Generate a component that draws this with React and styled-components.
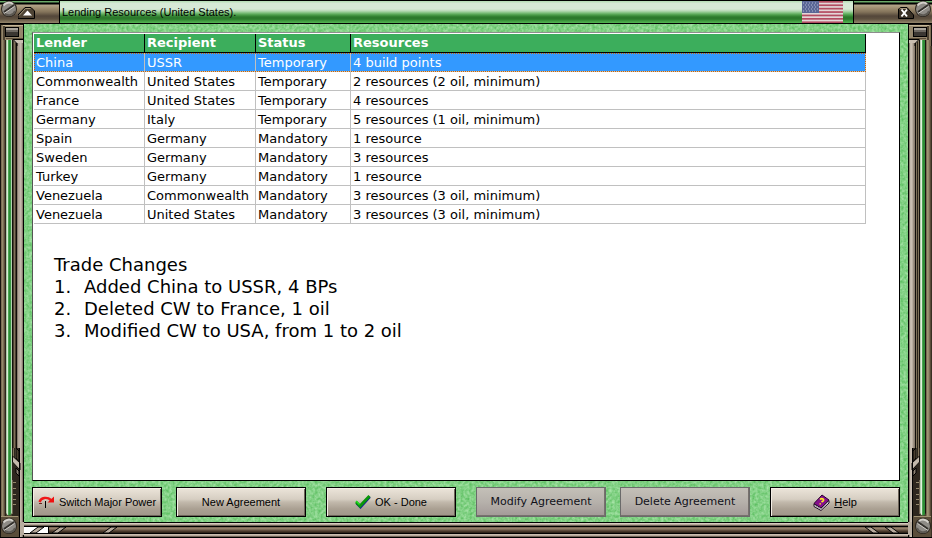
import React from "react";
import styled, { createGlobalStyle, ThemeProvider } from "styled-components";

const theme = {
    font: {
        system: '"Liberation Sans", Arial, sans-serif',
        grid: 'Verdana, "DejaVu Sans", sans-serif',
    },
    color: {
        header: "#3cae5c",
        selected: "#3399ff",
        line: "#c0c0c0",
    },
};

const GlobalStyle = createGlobalStyle`
    * {
        box-sizing: border-box;
    }

    body {
        margin: 0;
        background: #000;
    }

    svg {
        display: block;
        flex-shrink: 0;
    }
`;

// one colour per pixel, drawn as hard stripes
const stripes = (direction, colors) =>
    `linear-gradient(${direction}, ${colors.map((c, i) => `${c} ${i}px ${i + 1}px`).join(", ")})`;

const leftStripes = [
    "#17130e", "#7b6d54", "#94886b", "#7b6d54", "#5a4d3a", "#2b241a", "#a9c7a5", "#d9ecd7",
    "#4ca652", "#2f8d38", "#3b9a44", "#b6d3b2", "#16120d", "#4a3f30", "#7f7259", "#4a3f30",
    "#100d09", "#8a7e70", "#b3a79a", "#b8ad9f", "#c4b9ac", "#b3a79a", "#8a7e70", "#000",
];

const rightStripes = [
    "#000", "#8a7e70", "#c4b9ac", "#c9beb1", "#b8ad9f", "#9c9082", "#8a7e70", "#100d09",
    "#7f7259", "#2b241a", "#7f7259", "#100d09", "#b6d3b2", "#e2f0df", "#4ca652", "#2f8d38",
    "#2f8d38", "#17130e", "#7b6d54", "#a09373", "#94886b", "#7b6d54", "#5a4d3a", "#3a3023",
];

const bottomStripes = [
    "#000", "#d6cabd", "#b5a89a", "#6f6255", "#000", "#7d6a57", "#93806b", "#7d6a57",
    "#5e4d3d", "#463729", "#2e241a", "#000", "#c9bdae", "#b5a89a", "#6f6255", "#000",
];

const Window = styled.div`
    display: flex;
    flex-direction: column;
    min-height: 100vh;
`;

const TitleBar = styled.header`
    display: flex;
    height: 24px;
    border-top: 1px solid #000;
    border-bottom: 1px solid #000;
    background: linear-gradient(
        #b9dfb9 0 1px,
        #d6e9d6 2px 8px,
        #b5d9b3 10px,
        #7cbf7a 12px,
        #4a9c48 14px,
        #2c7a2c 16px 18px,
        #3f9a3f 20px,
        #56b654 22px
    );
`;

const Title = styled.h1`
    flex: 1;
    margin: 0;
    padding-left: 2px;
    font: 11px/22px ${props => props.theme.font.system};
    color: #000;
`;

const TitleCap = styled.div`
    display: flex;
    justify-content: ${props => (props.$right ? "flex-end" : "flex-start")};
    width: ${props => props.$width};
    border-right: ${props => (props.$right ? 0 : 1)}px solid #000;
    border-left: ${props => (props.$right ? 1 : 0)}px solid #000;
    background: linear-gradient(
        #6aa968 0 1px,
        #000 2px 3px,
        #b3a58a 4px,
        #a08f72 7px,
        #83735a 11px,
        #54473a 15px,
        #5e5140 18px,
        #94866b 22px
    );
`;

const CapButton = styled.button`
    width: 20px;
    height: 22px;
    padding: 0;
    border: 0;
    background: none;
`;

const FlagSlot = styled.div`
    padding-right: 10px;
`;

const Body = styled.div`
    display: flex;
    flex: 1;
`;

const Rail = styled.div`
    display: flex;
    flex-direction: column;
    justify-content: space-between;
    width: 24px;
    flex-shrink: 0;
    background: ${props => stripes("to right", props.$colors)};
`;

const Center = styled.div`
    display: flex;
    flex: 1;
    flex-direction: column;
    min-width: 0;
`;

const BottomBar = styled.div`
    display: flex;
    justify-content: space-between;
    height: 16px;
    background: ${stripes("to bottom", bottomStripes)};
`;

const Surface = styled.main`
    position: relative;
    display: flex;
    flex: 1;
    flex-direction: column;
    gap: 6px;
    padding: 8px 8px 5px;
    background: #82d085;
`;

const Texture = styled.svg`
    position: absolute;
    inset: 0;
    width: 100%;
    height: 100%;
`;

const Panel = styled.section`
    position: relative;
    flex: 1;
    border: 1px solid #000;
    border-top-color: #8d8d8d;
    border-left-color: #555;
    background: #fff;
    padding: 1px 33px 0 1px;
`;

const Table = styled.table`
    width: 100%;
    table-layout: fixed;
    border-collapse: separate;
    border-spacing: 0;
    font: 13px/16px ${props => props.theme.font.grid};
    color: #000;
`;

const HeadCell = styled.th`
    width: ${props => props.$width || "auto"};
    height: 19px;
    padding: 1px 2px;
    border-right: 1px solid #000;
    border-bottom: 1px solid #000;
    background: ${props => props.theme.color.header};
    color: #fff;
    text-align: left;
`;

const Cell = styled.td`
    height: 19px;
    padding: 2px 2px 0;
    border-right: 1px solid ${props => props.theme.color.line};
    border-bottom: 1px solid ${props => props.theme.color.line};
    white-space: nowrap;
`;

const Row = styled.tr`
    background: ${props => (props.$selected ? props.theme.color.selected : "#fff")};
    color: ${props => (props.$selected ? "#fff" : "#000")};
    outline: ${props => (props.$selected ? "1px dotted #cc6600" : "none")};
    outline-offset: -1px;
`;

const Changes = styled.div`
    padding: 30px 0 0 20px;
    font: 18px/22px ${props => props.theme.font.grid};
    color: #000;
`;

const ChangesTitle = styled.h2`
    margin: 0;
    font: inherit;
`;

const ChangesList = styled.ol`
    margin: 0;
    padding: 0;
    list-style: none;
`;

const Change = styled.li`
    display: flex;
`;

const ChangeNumber = styled.span`
    width: 30px;
`;

const Footer = styled.footer`
    position: relative;
    display: flex;
    justify-content: space-between;
`;

const ButtonGroup = styled.div`
    display: flex;
    gap: 14px;
`;

const Button = styled.button`
    display: flex;
    align-items: center;
    justify-content: center;
    gap: 4px;
    width: 130px;
    height: 30px;
    padding: 0;
    border: 1px solid #000;
    background: linear-gradient(#ece5da, #d6cec2 40%, #c2b9ac 50%, #aaa092 75%, #a0968a);
    box-shadow: inset 1px 1px #f4eee6, inset -1px -1px #6d6459;
    font: 11px/14px ${props => props.theme.font.system};
    color: #000;
    white-space: nowrap;

    &:disabled {
        border-color: #6a6a6a;
        background: linear-gradient(#c4c0b8, #b6b1ab 50%, #a39a98);
        box-shadow: inset -1px -1px #77716d;
        font-family: ${props => props.theme.font.grid};
        color: #101018;
    }
`;

const Screw = ({ cx, cy }) => (
    <g transform={`translate(${cx} ${cy})`}>
        <circle r="8" fill="#2c261f" />
        <circle r="7" fill="#8e8b86" />
        <path d="M-5.5 -3.5A6.5 6.5 0 0 1 4 -5" fill="none" stroke="#d5d2cc" strokeWidth="2" />
        <path d="M-5 4A6.5 6.5 0 0 0 6 2" fill="none" stroke="#5d5953" strokeWidth="2" />
        <path d="M-5 3L5 -4" stroke="#33302c" strokeWidth="2" />
        <path d="M-5 4.5L5.5 -2.5" stroke="#c9c6c1" strokeWidth="1" />
    </g>
);

const ScrewIcon = () => (
    <svg width="18" height="22">
        <Screw cx="9" cy="8" />
    </svg>
);

const MinimizeIcon = () => (
    <svg width="20" height="22">
        <path d="M0 17.5V14L7 6.5H13L16.5 10V17.5Z" fill="#4e4334" stroke="#000" />
        <path d="M1 14.5L7.5 7.5H12.5" fill="none" stroke="#a7987c" />
        <path d="M5 14.5L9.5 9.5L14 14.5Z" fill="#fff" />
    </svg>
);

const CloseIcon = () => (
    <svg width="20" height="22">
        <path d="M4.5 17.5V8L7 6.5H13L19.5 14V17.5Z" fill="#3a3126" stroke="#000" />
        <path d="M5.5 8L7 7.5H13" fill="none" stroke="#a7987c" />
        <path d="M7.5 8.5L13 15.5M13 8.5L7.5 15.5" stroke="#fff" strokeWidth="2" />
    </svg>
);

const stripeRows = [0, 2, 4, 6, 8, 10, 12];

const FlagIcon = () => (
    <svg width="41" height="22" viewBox="0 0 41 22">
        <rect width="41" height="22" fill="#e3d6d7" />
        {stripeRows.map(row => (
            <rect key={row} y={row * 1.7} width="41" height="1.7" fill="#b34c62" />
        ))}
        <rect width="17" height="12" fill="#5a6796" />
        {[2, 4, 6, 8, 10].map(y => (
            <path key={y} d={`M1 ${y}H16`} stroke="#aeb6cf" strokeDasharray="1 2" strokeDashoffset={y % 4 ? 0 : 1} />
        ))}
    </svg>
);

const RailTop = ({ flip }) => (
    <svg width="24" height="22">
        <g transform={flip ? "translate(24 0) scale(-1 1)" : undefined}>
            <rect width="24" height="16" fill="#94866b" />
            <path d="M0 .5H24M.5 0V22" stroke="#17130e" />
            <path d="M3 1.5H23" stroke="#c4b697" />
            <path d="M1.5 1V22" stroke="#7b6d54" />
            <rect x="3" y="2" width="2" height="14" fill="#4d4231" />
            <rect x="5.5" y="3.5" width="13" height="9" fill="#3b3732" stroke="#000" />
            <path d="M6 5H18" stroke="#a9a49b" strokeWidth="2" />
            <path d="M6 7H18" stroke="#6d6861" strokeWidth="2" />
            <path d="M6 14.5H23" stroke="#5a4d3a" />
            <path d="M13 15.5H24M23.5 0V22" stroke="#000" />
            <path d="M13 16H23V19H16Z" fill="#c9beb1" />
            <path d="M12.5 15L17 19.5V22" fill="none" stroke="#000" />
        </g>
    </svg>
);

const RailBottom = ({ flip }) => (
    <svg width="24" height="90">
        <g transform={flip ? "translate(24 0) scale(-1 1)" : undefined}>
            <rect x="12" width="8" height="90" fill="#2e271e" />
            <path d="M13.5 0V12M15.5 0V10" stroke="#7f7259" />
            <path d="M16 0L19 3V14L16 10Z" fill="#4a3f30" stroke="#000" />
            <path d="M12.5 8L20 15V22L12.5 14Z" fill="#c4b9ac" stroke="#100d09" />
            <path d="M16 20L19 23V28L16 25Z" fill="#8a7e70" stroke="#000" />
            {[34, 40, 46, 51, 56].map(y => (
                <path key={y} d={`M12 ${y}.5H16`} stroke="#94886b" />
            ))}
            <path d="M12.5 32V66" stroke="#6f6350" />
            <path d="M19.5 0V90" stroke="#000" />
            <path d="M6 64V65Q9 70 12 65V64V90H6Z" fill="#4d4231" />
            <rect x="1" y="68" width="18" height="22" fill="#5a4d3a" />
            <path d="M1 68.5H18" stroke="#a09373" />
            <path d="M0 89.5H24M23.5 0V74" stroke="#000" />
            <rect x="20" y="74" width="4" height="13" fill="#b8ad9f" />
            <Screw cx="9" cy="78" />
        </g>
    </svg>
);

const slash = x => `M${x} 11L${x + 8} 5H${x + 14}L${x + 6} 11Z`;

const BottomLeftTrim = () => (
    <svg width="94" height="16">
        <path d="M0 5H24V11H0Z" fill="#fff" />
        <path d="M24.5 5V11" stroke="#000" />
        <g fill="#b8ab9d" stroke="#000">
            <path d={slash(6)} />
            <path d={slash(28)} />
            <path d={slash(79)} />
        </g>
    </svg>
);

const BottomRightTrim = () => (
    <svg width="44" height="16">
        <g fill="#b8ab9d" stroke="#000">
            <path d="M1 5H7L15 11H9Z" />
            <path d="M21 5H27L35 11H29Z" />
        </g>
    </svg>
);

const SwitchIcon = () => (
    <svg width="17" height="14">
        <path d="M1.5 7C3 2.5 9 1.5 13 5" fill="none" stroke="#f01818" strokeWidth="2.4" />
        <path d="M9.5 7.5H16V1.5Z" fill="#f01010" />
        <path d="M7.5 6V13" stroke="#000" />
        <path d="M1 8.5H4" stroke="#6a2020" />
    </svg>
);

const CheckIcon = () => (
    <svg width="16" height="16">
        <path d="M1.5 9.5L5.5 13.5L15 3" fill="none" stroke="#1212a0" strokeWidth="2" />
        <path d="M1 8L5 12L14.5 2" fill="none" stroke="#0a960a" strokeWidth="3" />
        <path d="M1 7L4.5 10.5" stroke="#22e022" strokeWidth="1.4" />
    </svg>
);

const HelpIcon = () => (
    <svg width="17" height="17">
        <path d="M1 9.5L9 1L16 6L8 14.5Z" fill="#86108c" stroke="#2a0030" />
        <path d="M1 10V12.5L8 16.5L16 9V6.5L8 14Z" fill="#f4f0f4" stroke="#1c0a20" />
        <path d="M2 11.5L8 15L15 8" fill="none" stroke="#9a8a9c" />
        <path d="M7 5.5C9 3.5 12 5.5 10 7L8.5 8M7.2 9.2V10.4" fill="none" stroke="#ffee20" strokeWidth="1.6" />
    </svg>
);

const agreements = [
    ["China", "USSR", "Temporary", "4 build points"],
    ["Commonwealth", "United States", "Temporary", "2 resources (2 oil, minimum)"],
    ["France", "United States", "Temporary", "4 resources"],
    ["Germany", "Italy", "Temporary", "5 resources (1 oil, minimum)"],
    ["Spain", "Germany", "Mandatory", "1 resource"],
    ["Sweden", "Germany", "Mandatory", "3 resources"],
    ["Turkey", "Germany", "Mandatory", "1 resource"],
    ["Venezuela", "Commonwealth", "Mandatory", "3 resources (3 oil, minimum)"],
    ["Venezuela", "United States", "Mandatory", "3 resources (3 oil, minimum)"],
];

const changes = [
    "Added China to USSR, 4 BPs",
    "Deleted CW to France, 1 oil",
    "Modified CW to USA, from 1 to 2 oil",
];

const AgreementTable = () => (
    <Table>
        <thead>
            <tr>
                <HeadCell $width="111px">Lender</HeadCell>
                <HeadCell $width="111px">Recipient</HeadCell>
                <HeadCell $width="95px">Status</HeadCell>
                <HeadCell>Resources</HeadCell>
            </tr>
        </thead>
        <tbody>
            {agreements.map((agreement, index) => (
                <Row key={index} $selected={index === 0}>
                    {agreement.map((value, column) => (
                        <Cell key={column}>{value}</Cell>
                    ))}
                </Row>
            ))}
        </tbody>
    </Table>
);

const TradeChanges = () => (
    <Changes>
        <ChangesTitle>Trade Changes</ChangesTitle>
        <ChangesList>
            {changes.map((change, index) => (
                <Change key={change}>
                    <ChangeNumber>{index + 1}.</ChangeNumber>
                    {change}
                </Change>
            ))}
        </ChangesList>
    </Changes>
);

const Grain = () => (
    <Texture aria-hidden="true">
        <filter id="grain" x="0" y="0" width="100%" height="100%" colorInterpolationFilters="sRGB">
            <feTurbulence type="fractalNoise" baseFrequency="0.35" numOctaves="2" seed="4" />
            <feColorMatrix values="0.4 0 0 0 0.31  0.2 0 0 0 0.72  0.38 0 0 0 0.33  0 0 0 0 1" />
        </filter>
        <rect width="100%" height="100%" filter="url(#grain)" />
    </Texture>
);

const App = () => (
    <ThemeProvider theme={theme}>
        <GlobalStyle />
        <Window>
            <TitleBar>
                <TitleCap $width="60px">
                    <ScrewIcon />
                    <CapButton aria-label="Minimize">
                        <MinimizeIcon />
                    </CapButton>
                </TitleCap>
                <Title>Lending Resources (United States).</Title>
                <FlagSlot>
                    <FlagIcon />
                </FlagSlot>
                <TitleCap $width="79px" $right>
                    <CapButton aria-label="Close">
                        <CloseIcon />
                    </CapButton>
                    <ScrewIcon />
                </TitleCap>
            </TitleBar>
            <Body>
                <Rail $colors={leftStripes}>
                    <RailTop />
                    <RailBottom />
                </Rail>
                <Center>
                    <Surface>
                        <Grain />
                        <Panel>
                            <AgreementTable />
                            <TradeChanges />
                        </Panel>
                        <Footer>
                            <ButtonGroup>
                                <Button>
                                    <SwitchIcon />
                                    Switch Major Power
                                </Button>
                                <Button>New Agreement</Button>
                            </ButtonGroup>
                            <Button>
                                <CheckIcon />
                                OK - Done
                            </Button>
                            <ButtonGroup>
                                <Button disabled>Modify Agreement</Button>
                                <Button disabled>Delete Agreement</Button>
                            </ButtonGroup>
                            <Button>
                                <HelpIcon />
                                <span>
                                    <u>H</u>elp
                                </span>
                            </Button>
                        </Footer>
                    </Surface>
                    <BottomBar>
                        <BottomLeftTrim />
                        <BottomRightTrim />
                    </BottomBar>
                </Center>
                <Rail $colors={rightStripes}>
                    <RailTop flip />
                    <RailBottom flip />
                </Rail>
            </Body>
        </Window>
    </ThemeProvider>
);

export default App;
